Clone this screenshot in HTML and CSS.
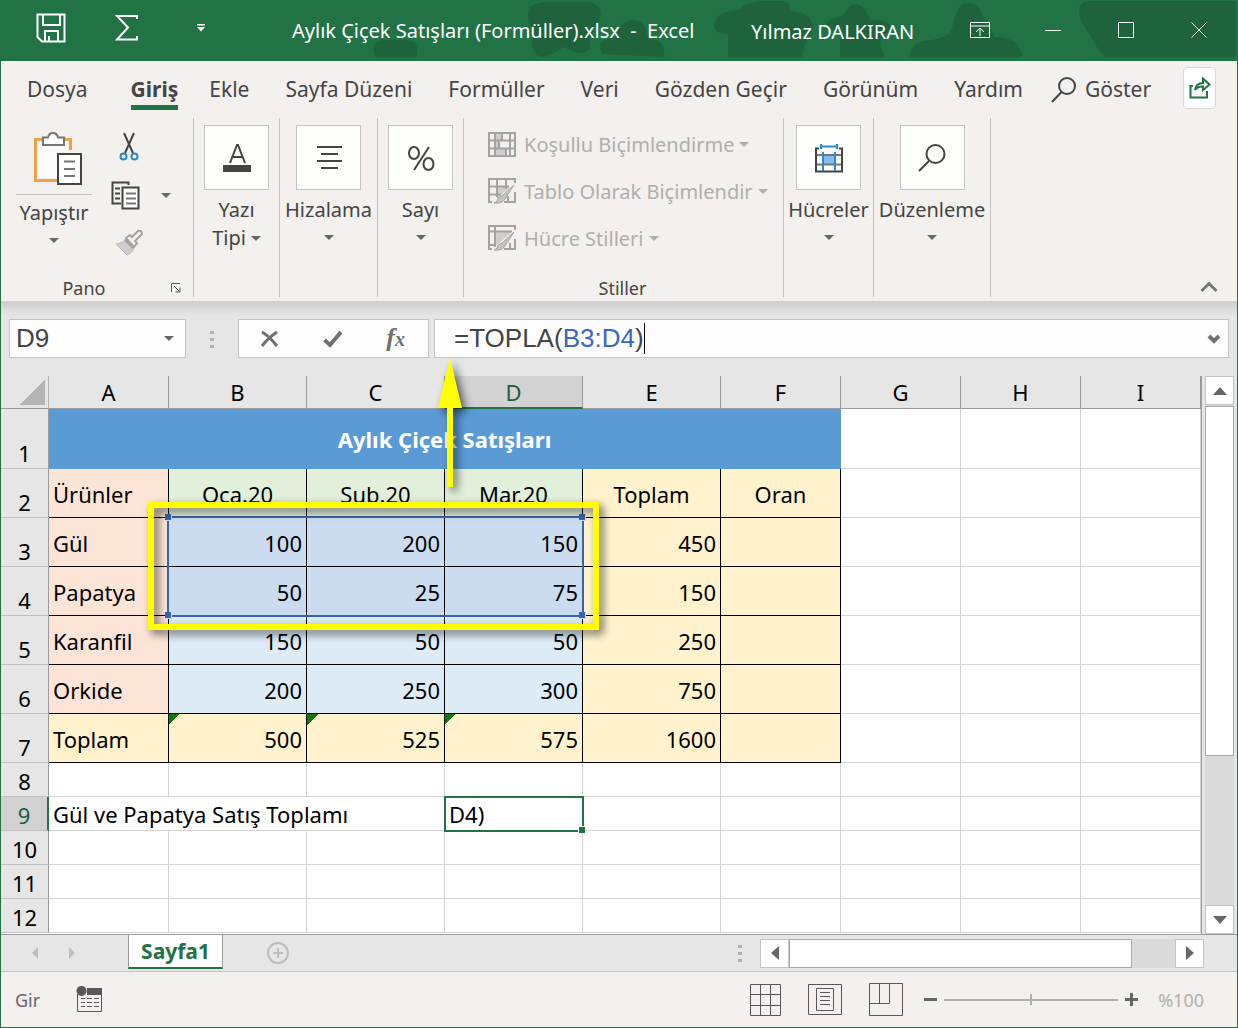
FILE: index.html
```html
<!DOCTYPE html>
<html lang="tr">
<head>
<meta charset="utf-8">
<meta name="viewport" content="width=device-width, initial-scale=1">
<title>Aylık Çiçek Satışları (Formüller).xlsx - Excel</title>
<link rel="stylesheet" href="styles.css">
</head>
<body>
<div class="window">
  <header class="titlebar">
    <svg class="titlebar-art" viewBox="0 0 880 61" width="880" height="61" aria-hidden="true">
      <path d="M16 48q2-8 12-8h20q12 0 12 8v9H18zM171 16q-2-14 22-14h34q20 0 16 18q-8 10-10 18v10q-6 8-14 4l-12-5l-14 8q-16 6-18-10V26q-4 0-4-10zM245 54q-8-14 12-16l6-10q4-8 14-8q12 0 14 18q18 2 16 19zM357 24q4-14 24-14q10-10 30-9h14q8 0 8 10q26 2 22 20q-8 12-10 26h-74V34q-14 0-14-10zM469 26q2-8 16-10l5-6q8-12 18 0l5 10q26 0 18 12q-8 6-8 14l6 11h-46V30q-12 0-14-4zM552 57q2-16 22-17q20-2 22-16q4-22 16-21q10 0 14 14l12 20q26 0 27 20zM730 1h149v56H748q-8-8-14-20q-22-30-4-36z"/>
    </svg>
    <div class="quick-access">
      <button class="icon-button" aria-label="Kaydet"><svg width="30" height="30" viewBox="0 0 30 30"><path d="M1.500 1.500H28.500V28.500H6L1.500 24ZM7 2V12H24V2M9 28V18H22V28M13 28V23" /></svg></button>
      <button class="icon-button" aria-label="Otomatik Toplam"><svg width="24" height="28" viewBox="0 0 24 28"><path d="M22 5V2H2L13 13.500L2 25.500H22V22"/></svg></button>
      <button class="icon-button" aria-label="Hızlı Erişim Araç Çubuğunu Özelleştir"><svg width="8" height="8" viewBox="0 0 8 8"><path class="solid" d="M0 0H8V1.500H0ZM0 3H8L4 7.500Z"/></svg></button>
    </div>
    <h1 class="doc-title">Aylık Çiçek Satışları (Formüller).xlsx &nbsp;-&nbsp; Excel</h1>
    <span class="user">Yılmaz DALKIRAN</span>
    <div class="window-controls">
      <button class="icon-button" aria-label="Şerit Görüntüleme Seçenekleri"><svg class="thin" width="20" height="16" viewBox="0 0 20 16"><path d="M.5.5H19.500V15.500H.5ZM.5 4H19.500M10 14V6M6 10L10 6L14 10"/></svg></button>
      <button class="icon-button" aria-label="Simge Durumuna Küçült"><svg class="thin" width="16" height="16" viewBox="0 0 16 16"><path d="M0 8.500H16"/></svg></button>
      <button class="icon-button" aria-label="Ekranı Kapla"><svg class="thin" width="16" height="16" viewBox="0 0 16 16"><path d="M.5.5H15.500V15.500H.5Z"/></svg></button>
      <button class="icon-button" aria-label="Kapat"><svg class="thin" width="16" height="16" viewBox="0 0 16 16"><path d="M.5.5L15.500 15.500M15.500.5L.5 15.500"/></svg></button>
    </div>
  </header>

  <nav class="tabs" aria-label="Şerit sekmeleri">
    <button class="tab tab-file">Dosya</button>
    <button class="tab tab-active" aria-current="page">Giriş</button>
    <button class="tab">Ekle</button>
    <button class="tab">Sayfa Düzeni</button>
    <button class="tab">Formüller</button>
    <button class="tab">Veri</button>
    <button class="tab">Gözden Geçir</button>
    <button class="tab">Görünüm</button>
    <button class="tab tab-last">Yardım</button>
    <button class="tab tab-search"><svg width="26" height="26" viewBox="0 0 26 26"><circle cx="16" cy="9" r="8"/><path d="M10.500 15L1 25"/></svg>Göster</button>
    <button class="share" aria-label="Paylaş"><svg width="22" height="22" viewBox="0 0 22 22"><path d="M4 9H1.500V20.500H18V14M6 13Q7 6 14 6V1.500L20.500 7.500L14 13V9.500Q9 9 6 13Z"/></svg></button>
  </nav>

  <section class="ribbon" aria-label="Giriş şeridi">
    <div class="group group-clipboard">
      <div class="clipboard-tools">
        <button class="paste">
          <svg width="50" height="54" viewBox="0 0 50 54"><path class="orange" d="M9 7.500H2.500V48.500H24M31 7.500H37.500V18"/><path class="page" d="M5 10H35V20H24V46H5Z"/><path class="clip" d="M10 5.500H15Q16 1 20 1T25 5.500H31V13H10Z"/><path class="leaf" d="M25 22H48V52H25Z"/><path class="rule" d="M31 29.500H42M31 37H42M31 44H42"/></svg>
          <span class="paste-label">Yapıştır</span>
          <span class="caret"></span>
        </button>
        <div class="clipboard-side">
          <button class="tool" aria-label="Kes"><svg width="20" height="29" viewBox="0 0 20 29"><path class="dark" d="M5 1L14 21M15 1L6 21"/><circle class="blue" cx="4.500" cy="24.500" r="3"/><circle class="blue" cx="15.500" cy="24.500" r="3"/></svg></button>
          <div class="copy-row">
            <button class="tool" aria-label="Kopyala"><svg width="29" height="29" viewBox="0 0 29 29"><path class="dark" d="M10 22.500H1.500V1.500H17.500V4M4 7.500H9M4 12.500H9M4 17.500H9"/><path class="leaf" d="M11.500 6.500H27.500V27.500H11.500Z"/><path class="rule" d="M15 12.500H25M15 17.500H25M15 22.500H25"/></svg></button>
            <button class="tool" aria-label="Kopyalama seçenekleri"><span class="caret"></span></button>
          </div>
          <button class="tool" aria-label="Biçim Boyacısı"><svg width="28" height="27" viewBox="0 0 28 27"><path class="gray-fill" d="M1 14Q9 13 11 8L19 16Q19 22 12 25Z"/><path class="gray-line" d="M11 8L15 5L17 7L23 1Q27 0 27 4L20 11L22 13L19 17ZM10 10L18 18"/></svg></button>
        </div>
      </div>
      <div class="group-footer"><span>Pano</span><button class="launcher" aria-label="Pano seçenekleri"><svg width="10" height="10" viewBox="0 0 10 10"><path d="M.5 9V.5H9M3 3L8.500 8.500M9 4.500V9H4.500"/></svg></button></div>
    </div>

    <div class="group group-font">
      <button class="big-tool"><span class="tile"><svg width="28" height="30" viewBox="0 0 28 30"><path class="dark" d="M7 20L14 2H15L22 20M9 14H20"/><path class="bar" d="M0 22H28V29H0Z"/></svg></span><span class="big-label">Yazı<br>Tipi<span class="caret caret-inline"></span></span></button>
    </div>
    <div class="group group-align">
      <button class="big-tool"><span class="tile"><svg width="26" height="26" viewBox="0 0 26 26"><path class="dark" d="M1 2H26M5 9H22M1 16H26M5 23H22"/></svg></span><span class="big-label">Hizalama</span><span class="caret"></span></button>
    </div>
    <div class="group group-number">
      <button class="big-tool"><span class="tile"><svg width="28" height="28" viewBox="0 0 28 28"><ellipse class="dark" cx="7" cy="9" rx="5" ry="6"/><ellipse class="dark" cx="21.500" cy="20" rx="5" ry="6"/><path class="dark" d="M22 3L7 26"/></svg></span><span class="big-label">Sayı</span><span class="caret"></span></button>
    </div>

    <div class="group group-styles">
      <div class="style-list">
        <button class="style-item" disabled><svg width="28" height="25" viewBox="0 0 28 25"><path class="gray-cell" d="M7 1H14V8H7ZM7 9H11V16H7ZM7 17H18V24H7Z"/><path class="gray-line" d="M1 1H27V24H1ZM1 8.500H27M1 16.500H27M7 1V24M22 1V24M14 1V8M11 9V16M18 17V24"/></svg>Koşullu Biçimlendirme<span class="caret"></span></button>
        <button class="style-item" disabled><svg width="28" height="27" viewBox="0 0 28 27"><path class="gray-cell" d="M9 9H22L10 20H9Z"/><path class="gray-line" d="M4 24H1V1H27V5M1 8.500H21M1 16.500H13M9 1V19M18 1V11M27 14V24H16M20 18V24"/><path class="gray-brush" d="M6 25Q10 24 10 20L14 18L26 7L17 21Q14 26 6 25Z"/></svg>Tablo Olarak Biçimlendir<span class="caret"></span></button>
        <button class="style-item" disabled><svg width="28" height="27" viewBox="0 0 28 27"><path class="gray-cell" d="M7 7H24L9 20H7Z"/><path class="gray-line" d="M4 24H1V1H27V5M1 6.500H24M7 1V22M1 20H7M27 14V24H16M22 18V24"/><path class="gray-brush" d="M6 25Q10 24 10 20L14 18L26 7L17 21Q14 26 6 25Z"/></svg>Hücre Stilleri<span class="caret"></span></button>
      </div>
      <div class="group-footer"><span>Stiller</span></div>
    </div>

    <div class="group group-cells">
      <button class="big-tool"><span class="tile"><svg width="28" height="30" viewBox="0 0 28 30"><path class="cell-fill" d="M8 12H20V22H8Z"/><path class="gray-rule" d="M1 12H27M1 21.500H27"/><path class="dark" d="M4 5.500H1V28.500H27V5.500H24"/><path class="blue" d="M8 9V28M20 9V28M6 1V6M22 1V6M6 3.500H22"/></svg></span><span class="big-label">Hücreler</span><span class="caret"></span></button>
    </div>
    <div class="group group-editing">
      <button class="big-tool"><span class="tile"><svg width="28" height="30" viewBox="0 0 28 30"><circle class="dark" cx="17.500" cy="11" r="9"/><path class="dark" d="M11 18L1 28"/></svg></span><span class="big-label">Düzenleme</span><span class="caret"></span></button>
    </div>
    <button class="collapse" aria-label="Şeridi daralt"><svg width="18" height="12" viewBox="0 0 18 12"><path d="M1.500 10L9 2.500L16.500 10"/></svg></button>
  </section>

  <section class="formula-bar" aria-label="Formül çubuğu">
    <div class="name-box">
      <input class="name-input" type="text" value="D9" aria-label="Ad kutusu">
      <button class="tool" aria-label="Ad listesi"><span class="caret"></span></button>
    </div>
    <span class="grip"></span>
    <div class="formula-actions">
      <button class="tool" aria-label="İptal"><svg width="20" height="18" viewBox="0 0 20 18"><path class="mark" d="M2 2Q9 6 17 16M17 2Q8 8 2 16"/></svg></button>
      <button class="tool" aria-label="Gir"><svg width="20" height="18" viewBox="0 0 20 18"><path class="mark mark-bold" d="M1.500 10L7 15L18 2"/></svg></button>
      <button class="tool fx" aria-label="İşlev Ekle">f<span class="fx-x">x</span></button>
    </div>
    <div class="formula-box">
      <div class="formula-input" role="textbox" contenteditable="true" spellcheck="false" aria-label="Formül">=TOPLA(<span class="ref">B3:D4</span>)<span class="cursor"></span></div>
      <button class="tool" aria-label="Formül çubuğunu genişlet"><svg width="14" height="10" viewBox="0 0 14 10"><path class="mark mark-bold" d="M2 2L7 7L12 2"/></svg></button>
    </div>
  </section>

  <main class="workspace">
    <div class="sheet-view">
      <table class="sheet">
        <colgroup><col class="col-head"><col class="col-s"><col class="col-m"><col class="col-m"><col class="col-m"><col class="col-m"><col class="col-s"><col class="col-s"><col class="col-s"><col class="col-s"><col></colgroup>
        <thead>
          <tr><th class="corner"></th><th scope="col">A</th><th scope="col">B</th><th scope="col">C</th><th scope="col" class="head-active">D</th><th scope="col">E</th><th scope="col">F</th><th scope="col">G</th><th scope="col">H</th><th scope="col">I</th><th></th></tr>
        </thead>
        <tbody>
          <tr class="row-title"><th scope="row">1</th><td class="banner" colspan="6">Aylık Çiçek Satışları</td><td></td><td></td><td></td><td></td></tr>
          <tr class="row-data"><th scope="row">2</th><td class="b peach">Ürünler</td><td class="b green center">Oca.20</td><td class="b green center">Sub.20</td><td class="b green center">Mar.20</td><td class="b cream center">Toplam</td><td class="b cream center">Oran</td><td></td><td></td><td></td><td></td></tr>
          <tr class="row-data"><th scope="row">3</th><td class="b peach">Gül</td><td class="b picked num">100</td><td class="b picked num">200</td><td class="b picked num">150</td><td class="b cream num">450</td><td class="b cream"></td><td></td><td></td><td></td><td></td></tr>
          <tr class="row-data"><th scope="row">4</th><td class="b peach">Papatya</td><td class="b picked num">50</td><td class="b picked num">25</td><td class="b picked num">75</td><td class="b cream num">150</td><td class="b cream"></td><td></td><td></td><td></td><td></td></tr>
          <tr class="row-data"><th scope="row">5</th><td class="b peach">Karanfil</td><td class="b sky num">150</td><td class="b sky num">50</td><td class="b sky num">50</td><td class="b cream num">250</td><td class="b cream"></td><td></td><td></td><td></td><td></td></tr>
          <tr class="row-data"><th scope="row">6</th><td class="b peach">Orkide</td><td class="b sky num">200</td><td class="b sky num">250</td><td class="b sky num">300</td><td class="b cream num">750</td><td class="b cream"></td><td></td><td></td><td></td><td></td></tr>
          <tr class="row-data"><th scope="row">7</th><td class="b cream">Toplam</td><td class="b cream num flagged">500</td><td class="b cream num flagged">525</td><td class="b cream num flagged">575</td><td class="b cream num">1600</td><td class="b cream"></td><td></td><td></td><td></td><td></td></tr>
          <tr><th scope="row">8</th><td></td><td></td><td></td><td></td><td></td><td></td><td></td><td></td><td></td><td></td></tr>
          <tr><th scope="row" class="head-active">9</th><td colspan="3">Gül ve Papatya Satış Toplamı</td><td class="editing">D4)<i class="fill-handle"></i></td><td></td><td></td><td></td><td></td><td></td><td></td></tr>
          <tr><th scope="row">10</th><td></td><td></td><td></td><td></td><td></td><td></td><td></td><td></td><td></td><td></td></tr>
          <tr><th scope="row">11</th><td></td><td></td><td></td><td></td><td></td><td></td><td></td><td></td><td></td><td></td></tr>
          <tr><th scope="row">12</th><td></td><td></td><td></td><td></td><td></td><td></td><td></td><td></td><td></td><td></td></tr>
        </tbody>
      </table>
    </div>
    <div class="vscroll">
      <button class="scroll-button" aria-label="Yukarı kaydır"><svg width="14" height="8" viewBox="0 0 14 8"><path d="M0 8L7 0L14 8Z"/></svg></button>
      <div class="vthumb"></div>
      <button class="scroll-button" aria-label="Aşağı kaydır"><svg width="14" height="8" viewBox="0 0 14 8"><path d="M0 0H14L7 8Z"/></svg></button>
    </div>
    <div class="range-outline"><i></i><i></i><i></i><i></i></div>
    <div class="callout-frame"></div>
    <svg class="callout-arrow" width="26" height="130" viewBox="0 0 26 130" aria-hidden="true"><path d="M13 0L25 50H16V129H10V50H1Z"/></svg>
  </main>

  <div class="sheet-bar">
    <div class="sheet-nav">
      <button class="tool" aria-label="Önceki sayfa"><svg width="8" height="12" viewBox="0 0 8 12"><path d="M7 0V12L1 6Z"/></svg></button>
      <button class="tool" aria-label="Sonraki sayfa"><svg width="8" height="12" viewBox="0 0 8 12"><path d="M1 0V12L7 6Z"/></svg></button>
    </div>
    <button class="sheet-tab">Sayfa1</button>
    <button class="tool add-sheet" aria-label="Yeni sayfa"><svg width="22" height="22" viewBox="0 0 22 22"><circle cx="11" cy="11" r="10"/><path d="M11 6V16M6 11H16"/></svg></button>
    <span class="grip grip-scroll"></span>
    <div class="hscroll">
      <button class="scroll-button" aria-label="Sola kaydır"><svg width="8" height="14" viewBox="0 0 8 14"><path d="M8 0V14L0 7Z"/></svg></button>
      <div class="hthumb"></div>
      <button class="scroll-button" aria-label="Sağa kaydır"><svg width="8" height="14" viewBox="0 0 8 14"><path d="M0 0V14L8 7Z"/></svg></button>
    </div>
  </div>

  <footer class="status-bar">
    <span class="mode">Gir</span>
    <button class="tool" aria-label="Makro kaydet"><svg width="27" height="27" viewBox="0 0 27 27"><path class="status-line" d="M1.500 8V25.500H25.500V3"/><path class="status-fill" d="M11 2H26V9H11ZM5 0a5 5 0 1 0 1 0z"/><path class="status-line" d="M5 12.500H9M11 12.500H16M18 12.500H23M5 16.500H9M11 16.500H16M18 16.500H23M5 20.500H9M11 20.500H16M18 20.500H23"/></svg></button>
    <div class="views">
      <button class="tool" aria-label="Normal"><svg width="31" height="32" viewBox="0 0 31 32"><path class="status-line" d="M.5.5H30.500V31.500H.5ZM10.500.5V31.500M20.500.5V31.500M.5 10.500H30.500M.5 21.500H30.500"/></svg></button>
      <button class="tool" aria-label="Sayfa Düzeni"><svg width="34" height="31" viewBox="0 0 34 31"><path class="status-line" d="M.5.5H33.500V30.500H.5ZM8.500 4.500H25.500V26.500H8.500ZM12 8.500H22M12 12.500H22M12 16.500H22M12 20.500H22"/></svg></button>
      <button class="tool" aria-label="Sayfa Sonu Önizleme"><svg width="34" height="33" viewBox="0 0 34 33"><path class="status-line" d="M.5.5H33.500V32.500H.5ZM.5 20.500H20.500V.5M10.500.5V20.500"/></svg></button>
    </div>
    <div class="zoom">
      <button class="tool" aria-label="Uzaklaştır"><svg width="15" height="15" viewBox="0 0 15 15"><path class="status-bold" d="M1 7.500H14"/></svg></button>
      <input class="zoom-slider" type="range" min="0" max="200" value="100" aria-label="Yakınlaştırma">
      <button class="tool" aria-label="Yakınlaştır"><svg width="15" height="15" viewBox="0 0 15 15"><path class="status-bold" d="M1 7.500H14M7.500 1V14"/></svg></button>
      <span class="zoom-value">%100</span>
    </div>
  </footer>
</div>
</body>
</html>
```
FILE: styles.css
```css
:root {
  --green: #217346;
  --panel: #f3f0ee;
  --gray: #e6e6e6;
  --line: #c6c4c2;
  --ink: #444;
  --ui: "Noto Sans", "Open Sans", sans-serif;
}

* { box-sizing: border-box; }

body { margin: 0; font-family: var(--ui); font-size: 20px; color: var(--ink); }

button { padding: 0; border: 0; background: none; font: inherit; color: inherit; }

svg { display: block; fill: none; flex: none; }

.window {
  display: flex;
  flex-direction: column;
  min-height: 100vh;
  border: 1px solid var(--green);
  border-top: 0;
  background: var(--panel);
}

/* Title bar */
.titlebar {
  position: relative;
  display: flex;
  align-items: center;
  height: 61px;
  background: var(--green);
  color: #fff;
  overflow: hidden;
}
.titlebar > * { position: relative; }
.titlebar .titlebar-art { position: absolute; right: 0; top: 0; fill: #1e633c; }
.icon-button svg { stroke: #fff; stroke-width: 2; }
.icon-button .thin { stroke-width: 1; }
.icon-button .solid { fill: #fff; stroke: none; }
.quick-access { display: flex; align-items: center; padding: 0 0 6px 35px; width: 291px; }
.quick-access .icon-button + .icon-button { margin-left: 49px; }
.quick-access .icon-button:last-child { margin-left: 58px; }
.doc-title { margin: 0; font-size: 20px; font-weight: 400; white-space: nowrap; width: 459px; }
.user { white-space: nowrap; padding-top: 2px; }
.window-controls { display: flex; align-items: center; gap: 57px; margin-left: auto; padding: 0 30px 2px 0; }
.window-controls .icon-button:first-child { margin-right: -2px; }

/* Ribbon tabs */
.tabs { display: flex; align-items: center; height: 57px; padding: 0 21px 0 26px; }
.tab { height: 41px; margin-right: 36px; font-size: 21px; white-space: nowrap; border-bottom: 5px solid transparent; border-top: 5px solid transparent; line-height: 31px; }
.tab-file { margin-right: 43px; }
.tab-active { margin-right: 31px; font-weight: 700; border-bottom-color: var(--green); }
.tab-last { margin-right: 28px; }
.tab-search { display: flex; align-items: center; gap: 8px; margin: 0; }
.tab-search svg { stroke: var(--ink); stroke-width: 2; }
.share { display: grid; place-items: center; width: 33px; height: 42px; margin: 0 0 4px auto; background: #fff; border: 1px solid #dcd8d8; border-radius: 4px; }
.share svg { stroke: var(--green); stroke-width: 2; }

/* Ribbon */
.ribbon { display: flex; height: 184px; padding-bottom: 4px; border-bottom: 1px solid #d2d0ce; }
.group { display: flex; flex-direction: column; border-right: 1px solid var(--line); flex: none; }
.group-clipboard { width: 193px; }
.group-font, .group-number { width: 86px; }
.group-align { width: 98px; }
.group-styles { width: 320px; }
.group-cells { width: 90px; }
.group-editing { width: 117px; }
.group-footer { display: flex; justify-content: center; align-items: center; position: relative; height: 18px; margin-top: auto; margin-right: 2px; font-size: 18px; }
.group-clipboard .group-footer { padding-right: 24px; }
.launcher { position: absolute; right: 10px; top: 4px; }
.launcher svg { stroke: #555; }
.caret { display: block; width: 0; height: 0; border: 5px solid transparent; border-top-color: #666; border-bottom: 0; }
.clipboard-tools { display: flex; padding: 14px 0 0 15px; }
.paste { display: flex; flex-direction: column; align-items: center; width: 76px; }
.paste svg { margin-left: 8px; }
.paste-label { width: 100%; margin-top: 8px; padding-top: 4px; border-top: 1px solid var(--line); line-height: 28px; }
.paste .caret { margin-top: 11px; }
.clipboard-side { display: flex; flex-direction: column; align-items: flex-start; gap: 20px; padding-left: 19px; }
.clipboard-side > .tool:first-child { margin-left: 8px; }
.clipboard-side > .tool:last-child { margin-left: 4px; }
.copy-row { display: flex; align-items: center; gap: 21px; }
.orange { stroke: #eda24a; stroke-width: 3; }
.page { fill: #fafafa; }
.clip { fill: #fff; stroke: #777; stroke-width: 2; }
.leaf { fill: #fff; stroke: #444; stroke-width: 2; }
.rule, .gray-rule { stroke: #777; stroke-width: 2; }
.dark { stroke: #444; stroke-width: 2; }
.blue { stroke: #2e87c8; stroke-width: 2; }
.bar { fill: #444; }
.cell-fill { fill: #83beec; }
.gray-line { stroke: #a3a3a3; stroke-width: 2; }
.gray-fill, .gray-cell { fill: #cfcdcd; }
.gray-fill { stroke: #b5b5b5; }
.gray-brush { fill: #c4c2c2; stroke: #a3a3a3; stroke-width: 1; }
.big-tool { display: flex; flex-direction: column; align-items: center; padding-top: 7px; }
.tile { display: grid; place-items: center; width: 65px; height: 65px; background: #fdfefa; border: 1px solid var(--line); }
.big-label { margin-top: 6px; line-height: 28px; white-space: nowrap; }
.big-tool > .caret { margin-top: 11px; }
.caret-inline { display: inline-block; margin-left: 5px; vertical-align: 4px; }
.style-list { display: flex; flex-direction: column; align-items: flex-start; gap: 15px; padding: 10px 0 0 24px; }
.style-item { display: flex; align-items: center; gap: 8px; height: 32px; color: #b0aeac; white-space: nowrap; }
.style-item .caret { margin-left: -3px; border-top-color: #b0aeac; }
.collapse { margin: auto 19px 4px auto; }
.collapse svg { stroke: #777; stroke-width: 3; }

/* Formula bar */
.formula-bar { display: flex; height: 74px; padding: 17px 8px 18px; background: linear-gradient(#cfcfcf, var(--gray) 14px); font-family: "Liberation Sans", Arial, sans-serif; font-size: 26px; }
.formula-bar > div { background: #fdfdfd; border: 1px solid var(--line); height: 39px; display: flex; align-items: center; }
.name-box { width: 177px; padding-right: 11px; }
.name-input { flex: 1; min-width: 0; height: 36px; padding: 0 0 0 6px; border: 0; outline: 0; background: none; font: inherit; color: #444; }
.grip { width: 4px; height: 20px; margin: 10px 24px 0; background: radial-gradient(circle 2px, #b0b0b0 99%, transparent) 0 0 / 4px 7px; }
.formula-actions { width: 191px; justify-content: space-between; padding: 0 23px 0 21px; margin-right: 5px; }
.mark { stroke: #707070; stroke-width: 3; }
.mark-bold { stroke-width: 4; }
.fx { font: italic 700 26px/30px "Liberation Serif", serif; color: #707070; }
.fx-x { font-size: 20px; }
.formula-box { flex: 1; justify-content: space-between; padding: 0 7px 0 19px; }
.formula-input { display: flex; align-items: center; outline: 0; white-space: nowrap; }
.ref { color: #3a68c4; }
.cursor { width: 1px; height: 31px; background: #000; }

/* Worksheet */
.workspace { position: relative; display: flex; flex: 1; background: var(--gray); }
.sheet-view { flex: 1; min-width: 0; overflow: hidden; border-right: 1px solid #9b9b9b; background: #fff; }
.sheet { table-layout: fixed; width: 1204px; border-collapse: separate; border-spacing: 0; font-family: var(--ui); font-size: 22px; line-height: 28px; color: #000; }
.col-head { width: 48px; }
.col-s { width: 120px; }
.col-m { width: 138px; }
.sheet th { padding: 0; height: 34px; font-weight: 400; background: var(--gray); border: 0 solid #b5b5b5; border-width: 0 1px 1px 0; border-right-color: #9b9b9b; }
.sheet tbody th { padding-bottom: 1px; border-bottom-color: #c0c0c0; vertical-align: bottom; }
.sheet thead th { height: 33px; border-bottom-color: #9b9b9b; }
.sheet .corner { background: linear-gradient(135deg, transparent 50%, #b4b4b4 50%) 18px 3px / 26px 26px no-repeat var(--gray); border-right-color: #b5b5b5; }
.sheet thead .head-active { color: #1e5c3c; background: #d2d2d2; border-bottom: 2px solid var(--green); }
.sheet tbody .head-active { color: #1e5c3c; background: #d2d2d2; border-right: 2px solid var(--green); }
.sheet td { padding: 0 4px; height: 34px; border: 0 solid #d4d4d4; border-width: 0 1px 1px 0; white-space: nowrap; vertical-align: middle; }
.sheet .row-title > * { height: 60px; }
.sheet .row-data > * { height: 49px; }
.sheet .banner { background: #5b9bd5; color: #fff; font-weight: 700; text-align: center; border-color: #5b9bd5; }
.sheet .b { border-color: #000; padding-top: 2px; }
.peach { background: #fce4d6; }
.green { background: #e2efda; }
.cream { background: #fff2cc; }
.sky { background: #ddebf7; }
.picked { background: #cbdcf0; }
.center { text-align: center; }
.num { text-align: right; }
.flagged { background: linear-gradient(135deg, #0e7a0e 50%, transparent 50%) 0 0 / 11px 11px no-repeat #fff2cc; }
.sheet .editing { position: relative; outline: 2px solid var(--green); outline-offset: -1px; background: #fff; }
.fill-handle { position: absolute; right: -3px; bottom: -3px; width: 7px; height: 7px; background: var(--green); border: 1px solid #fff; border-width: 1px 0 0 1px; }

/* Marks that lie over the worksheet */
.range-outline { position: absolute; left: 166px; top: 140px; width: 417px; height: 101px; border: 2px solid #3a63ad; }
.range-outline i { position: absolute; width: 7px; height: 7px; background: #3a63ad; border: 1px solid #cbdcf0; border-width: 0 1px 1px 0; }
.range-outline i:nth-child(odd) { left: -4px; }
.range-outline i:nth-child(even) { right: -4px; }
.range-outline i:nth-child(-n+2) { top: -4px; }
.range-outline i:nth-child(n+3) { bottom: -4px; }
.callout-frame { position: absolute; left: 147px; top: 126px; width: 451px; height: 128px; border: 6px solid #ff0; filter: drop-shadow(4px 4px 4px rgba(0, 0, 0, .6)); }
.callout-arrow { position: absolute; left: 436px; top: -18px; fill: #ff0; overflow: visible; filter: drop-shadow(4px 4px 4px rgba(0, 0, 0, .6)); }

/* Scroll bars */
.vscroll { display: flex; flex-direction: column; width: 29px; margin: 0 3px 0 3px; background: #dadada; }
.scroll-button { display: grid; place-items: center; flex: none; width: 29px; height: 29px; background: #fff; border: 1px solid var(--line); }
.scroll-button svg { fill: #666; }
.vthumb { height: 350px; margin: 1px 0 auto; background: #fff; border: 1px solid #a8a8a8; }
.hscroll { display: flex; width: 444px; margin-right: 33px; background: #dadada; }
.hthumb { flex: none; width: 343px; margin-right: auto; background: #fff; border: 1px solid #a8a8a8; }

/* Sheet tabs */
.sheet-bar { display: flex; align-items: center; height: 38px; background: var(--gray); border-top: 1px solid #9b9b9b; border-bottom: 1px solid var(--line); }
.sheet-nav { display: flex; gap: 29px; width: 127px; padding-left: 30px; }
.sheet-nav svg { fill: #bdbdbd; }
.sheet-tab { align-self: flex-start; width: 95px; height: 34px; background: #fff; border: 1px solid #9b9b9b; border-top: 0; border-bottom: 2px solid var(--green); color: var(--green); font-weight: 700; font-size: 21px; line-height: 30px; }
.add-sheet { margin-left: 44px; }
.add-sheet svg { stroke: #bdbdbd; stroke-width: 2; }
.grip-scroll { margin: 0 18px 0 auto; }

/* Status bar */
.status-bar { display: flex; align-items: center; height: 55px; padding: 0 33px 0 14px; font-size: 18px; color: #666; }
.mode { width: 61px; }
.status-line { stroke: #5c5654; }
.status-fill { fill: #5c5654; }
.status-bold { stroke: #666; stroke-width: 3; }
.views { display: flex; align-items: center; gap: 27px; margin-left: auto; }
.zoom { display: flex; align-items: center; gap: 6px; margin-left: 20px; }
.zoom-slider { appearance: none; width: 174px; height: 12px; margin: 0; background: linear-gradient(#b0aeac, #b0aeac) center / 100% 2px no-repeat; }
.zoom-slider::-webkit-slider-thumb { appearance: none; width: 2px; height: 11px; background: #b0aeac; }
.zoom-value { margin-left: 13px; color: #b0aeac; }
```
